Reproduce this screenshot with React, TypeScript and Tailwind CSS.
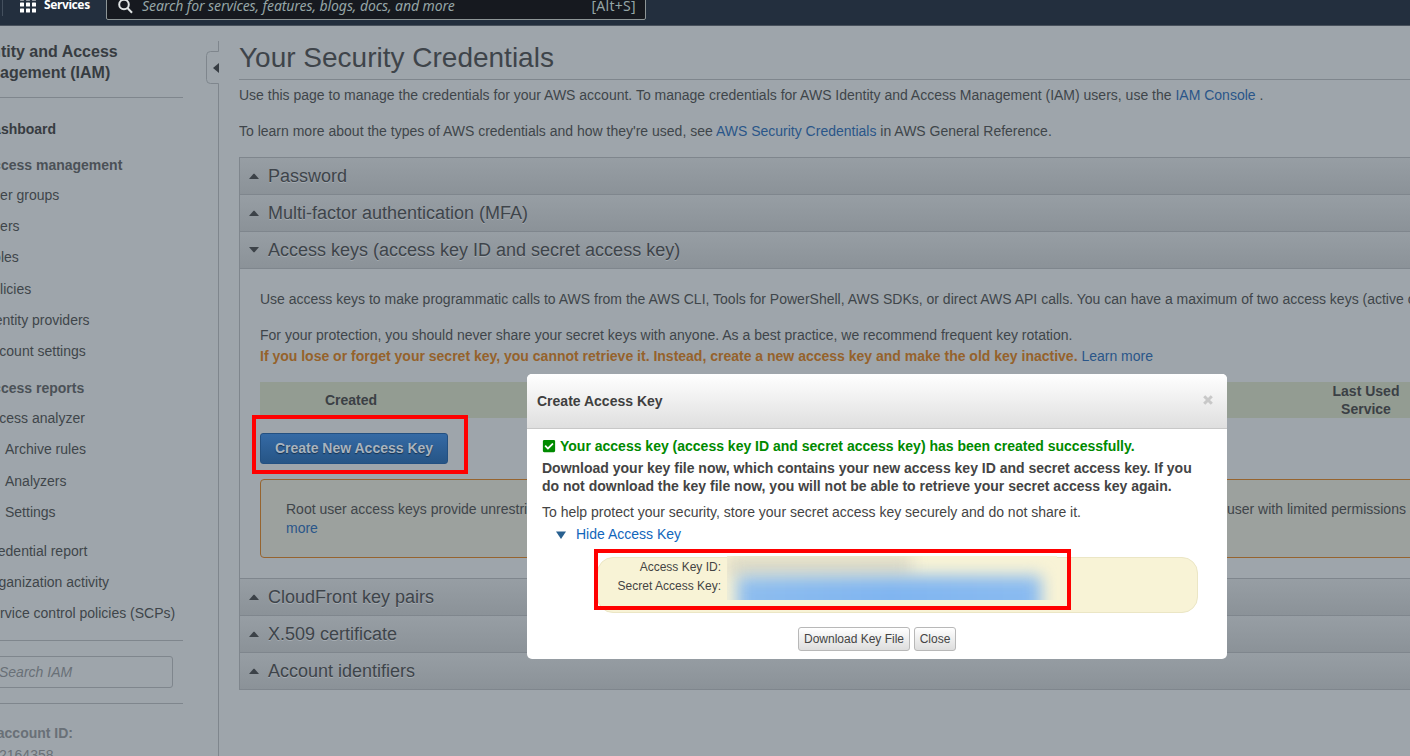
import React from "react";
import { FaCheckSquare } from "react-icons/fa";

const NAV: { label: string; kind: "bold" | "head" | "item" | "sub"; h: string }[] = [
  { label: "Dashboard", kind: "bold", h: "h-[36px]" },
  { label: "Access management", kind: "head", h: "h-[36px]" },
  { label: "User groups", kind: "item", h: "h-[24px]" },
  { label: "Users", kind: "item", h: "h-[38px]" },
  { label: "Roles", kind: "item", h: "h-[24px]" },
  { label: "Policies", kind: "item", h: "h-[40px]" },
  { label: "Identity providers", kind: "item", h: "h-[22px]" },
  { label: "Account settings", kind: "item", h: "h-[40px]" },
  { label: "Access reports", kind: "head", h: "h-[34px]" },
  { label: "Access analyzer", kind: "item", h: "h-[26px]" },
  { label: "Archive rules", kind: "sub", h: "h-[36px]" },
  { label: "Analyzers", kind: "sub", h: "h-[28px]" },
  { label: "Settings", kind: "sub", h: "h-[34px]" },
  { label: "Credential report", kind: "item", h: "h-[44px]" },
  { label: "Organization activity", kind: "item", h: "h-[18px]" },
  { label: "Service control policies (SCPs)", kind: "item", h: "h-[44px]" },
];

const NAV_STYLE = {
  bold: "font-bold text-[#373c41]",
  head: "font-bold text-[#4b5157]",
  item: "text-[#3f454a]",
  sub: "pl-[22px] text-[#3f454a]",
};

function TopBar() {
  return (
    <header className="flex h-[26px] shrink-0 items-start overflow-hidden border-b border-[#48515c] bg-[#232f3e] font-['Noto_Sans','Open_Sans',sans-serif]">
      <div className="ml-[2px] h-[16px] w-px bg-[#44505e]" />
      <svg className="ml-[17px] -mt-[4px] shrink-0" width="16" height="17" viewBox="0 0 16 17" fill="#fff">
        {[0, 6, 12].map((y) =>
          [0, 6, 12].map((x) => <rect key={`${x}-${y}`} x={x} y={y + 0.5} width="4" height="4" rx="0.6" />)
        )}
      </svg>
      <span className="ml-[8px] -mt-[4px] w-[62px] shrink-0 text-[12px] leading-[18px] font-bold tracking-[-0.4px] text-white">Services</span>
      <div className="-mt-[11px] flex h-[31px] w-[540px] items-center rounded-[2px] border border-[#8d9596] bg-[#16191f] pt-[2px] pr-[9px] pl-[11px] text-[#95a5a6]">
        <svg width="15" height="16" viewBox="0 0 15 16" fill="none" stroke="#e0e4e4" strokeWidth="2">
          <circle cx="6" cy="6.5" r="4.8" />
          <path d="M9.5 10 L14 14.8" />
        </svg>
        <span className="ml-[9px] text-[14px] leading-[18px] tracking-[-0.08px] whitespace-nowrap italic">Search for services, features, blogs, docs, and more</span>
        <span className="ml-auto text-[14px] leading-[18px] tracking-[0.3px]">[Alt+S]</span>
      </div>
    </header>
  );
}

function Sidebar() {
  return (
    <nav className="flex h-[730px] w-[206px] shrink-0 flex-col overflow-hidden text-[14px] whitespace-nowrap">
      <div className="-ml-[32px] mt-[15px] text-[16px] leading-[21px] font-bold text-[#373c41]">
        <div>Identity and Access</div>
        <div>Management (IAM)</div>
      </div>
      <div className="mt-[14px] w-[183px] shrink-0 border-t border-[#7f868d]" />
      <div className="-ml-[17px] mt-[13px]">
        {NAV.map((n) => (
          <div key={n.label} className={`flex items-center ${n.h} ${NAV_STYLE[n.kind]}`}>
            {n.label}
          </div>
        ))}
      </div>
      <div className="mt-[5px] w-[183px] shrink-0 border-t border-[#7f868d]" />
      <div className="-ml-[15px] mt-[15px] flex h-[32px] w-[188px] shrink-0 items-center rounded-[3px] border border-[#7f868d] pl-[13px] text-[#697077] italic">
        Search IAM
      </div>
      <div className="mt-[15px] w-[183px] shrink-0 border-t border-[#7f868d]" />
      <div className="-ml-[39px] mt-[18px] text-[14px] leading-[22px] text-[#697077]">
        <div className="font-bold">AWS account ID:</div>
        <div className="pl-[38px]">2164358</div>
      </div>
    </nav>
  );
}

function Rail() {
  return (
    <div className="flex h-[730px] w-[13px] shrink-0 flex-col pt-[15px]">
      <div className="h-[10px] shrink-0 border-r border-[#7f868d]" />
      <svg className="shrink-0" width="13" height="33" viewBox="0 0 13 33" fill="none">
        <path d="M12.5 0V.5H4.5Q.5 .5 .5 4.5V28.5Q.5 32.5 4.5 32.5H12.5V33" stroke="#7f868d" />
        <path d="M13 12V22L7 17Z" fill="#373d43" />
      </svg>
      <div className="grow border-r border-[#7f868d]" />
    </div>
  );
}

function SectionBar({ title, open, last }: { title: string; open?: boolean; last?: boolean }) {
  return (
    <div
      className={`flex shrink-0 items-center border-t border-l border-[#7f868d] bg-linear-to-b from-[#979ea4] to-[#8b9298] pl-[9px] ${last || open ? "h-[38px] border-b" : "h-[37px]"}`}
    >
      <svg className="-mt-[1px]" width="10" height="6" viewBox="0 0 10 6" fill="#3c4248">
        <path d={open ? "M0 0H10L5.5 5.2H4.5Z" : "M0 6H10L5.5 .8H4.5Z"} />
      </svg>
      <h2 className="ml-[9px] text-[18px] leading-[24px] text-[#3e444a] [text-shadow:0_1px_0_#a5acb2]">{title}</h2>
    </div>
  );
}

function AccessKeysPanel() {
  return (
    <section className="h-[309px] shrink-0 border-l border-[#7f868d] pt-[20px] pl-[20px] text-[14px] leading-[21px]">
      <p>
        Use access keys to make programmatic calls to AWS from the AWS CLI, Tools for PowerShell, AWS SDKs, or direct AWS API calls. You can have a maximum of two access keys (active or inactive) at a time.
      </p>
      <p className="mt-[15px]">
        For your protection, you should never share your secret keys with anyone. As a best practice, we recommend frequent key rotation.
      </p>
      <p>
        <b className="text-[#95622b]">
          If you lose or forget your secret key, you cannot retrieve it. Instead, create a new access key and make the old key inactive.
        </b>{" "}
        <a className="text-[#2a5689]">Learn more</a>
      </p>
      <div className="mt-[15px] flex h-[36px] items-center bg-[#939c92] text-center leading-[18px] font-bold text-[#3b4045]">
        <div className="w-[182px] shrink-0">Created</div>
        <div className="ml-[882px] w-[84px] shrink-0 whitespace-normal">Last Used Service</div>
      </div>
      <button className="mt-[15px] block h-[31px] w-[188px] rounded-[3px] border border-[#235081] bg-linear-to-b from-[#356aa5] to-[#265586] text-[14px] font-bold text-[#a9b4bf] [text-shadow:0_1px_1px_#16304d]">
        Create New Access Key
      </button>
      <div className="mt-[15px] flex h-[79px] w-[1400px] flex-col justify-center rounded-[4px] border border-[#96642f] bg-[#9ca19e] pl-[25px] leading-[19px]">
        <div className="flex">
          <span className="w-[941px]">Root user access keys provide unrestricted access</span>
          <span>user with limited permissions and</span>
        </div>
        <a className="text-[#2a5689]">more</a>
      </div>
    </section>
  );
}

function Dialog() {
  return (
    <div className="absolute top-[374px] left-[527px] h-[285px] w-[700px] rounded-[5px] bg-white text-[14px] text-[#444]">
      <div className="flex h-[55px] items-center justify-between rounded-t-[5px] border-b border-[#c8c8c8] bg-linear-to-b from-white to-[#dfdfdf] pr-[14px] pl-[10px]">
        <h3 className="font-bold text-[#3f3f3f]">Create Access Key</h3>
        <svg className="-mt-[2px]" width="10" height="10" viewBox="0 0 10 10" stroke="#c8c8c8" strokeWidth="3">
          <path d="M1.2 1.2L8.8 8.8M8.8 1.2L1.2 8.8" />
        </svg>
      </div>
      <div className="pt-[7px] pl-[15px] whitespace-nowrap">
        <div className="flex h-[20px] items-center font-bold text-[#008a00]">
          <FaCheckSquare className="mr-[4px] h-[14px] w-[14px]" />
          Your access key (access key ID and secret access key) has been created successfully.
        </div>
        <p className="mt-[3px] leading-[18px] font-bold">
          Download your key file now, which contains your new access key ID and secret access key. If you
          <br />
          do not download the key file now, you will not be able to retrieve your secret access key again.
        </p>
        <p className="mt-[8px] leading-[18px]">
          To help protect your security, store your secret access key securely and do not share it.
        </p>
        <div className="mt-[4px] flex h-[18px] items-center pl-[14px]">
          <svg className="mt-[2px]" width="10" height="8" viewBox="0 0 10 8" fill="#286090">
            <path d="M0 .5H10L5 8Z" />
          </svg>
          <a className="ml-[10px] text-[#1166bb]">Hide Access Key</a>
        </div>
      </div>
      <div className="mt-[14px] ml-[70px] flex h-[56px] w-[601px] rounded-[16px] border border-[#ebe6c5] bg-[#f8f3d6] text-[12px] leading-[19px]">
        <div className="w-[123px] text-right">
          <div>Access Key ID:</div>
          <div>Secret Access Key:</div>
        </div>
        <div className="-mt-[2px] ml-[6px] h-[44px] w-[330px] overflow-hidden bg-[#f8f3d6]">
          <div className="h-[20px] w-[184px] bg-[#dcd8c4] blur-[8px]" />
          <div className="ml-[10px] h-[44px] w-[304px] bg-linear-to-r from-[#8ebdee] via-[#80b5f0] to-[#8abbf0] blur-[8px]" />
        </div>
      </div>
      <div className="mt-[14px] ml-[271px] flex gap-[4px] text-[12px] text-[#444]">
        <button className="h-[24px] w-[112px] rounded-[3px] border border-[#b8b8b8] bg-linear-to-b from-white to-[#dddddd] whitespace-nowrap">Download Key File</button>
        <button className="h-[24px] w-[42px] rounded-[3px] border border-[#b8b8b8] bg-linear-to-b from-white to-[#dddddd]">Close</button>
      </div>
    </div>
  );
}

export default function App() {
  return (
    <div className="relative h-[756px] w-[1410px] overflow-hidden bg-[#9ea5ab] font-['Liberation_Sans',Arial,sans-serif] text-[#3f454a]">
      <TopBar />
      <div className="flex">
        <Sidebar />
        <Rail />
        <main className="ml-[20px] flex h-[730px] grow flex-col overflow-hidden whitespace-nowrap">
          <h1 className="h-[54px] shrink-0 border-b border-[#7f868d] pt-[14px] text-[28px] leading-[36px] text-[#3e444a]">
            Your Security Credentials
          </h1>
          <p className="mt-[5px] text-[14px] leading-[21px]">
            Use this page to manage the credentials for your AWS account. To manage credentials for AWS Identity and Access Management (IAM) users, use the{" "}
            <a className="text-[#2a5689]">IAM Console</a> .
          </p>
          <p className="mt-[15px] mb-[15px] text-[14px] leading-[21px]">
            To learn more about the types of AWS credentials and how they're used, see{" "}
            <a className="text-[#2a5689]">AWS Security Credentials</a> in AWS General Reference.
          </p>
          <SectionBar title="Password" />
          <SectionBar title="Multi-factor authentication (MFA)" />
          <SectionBar title="Access keys (access key ID and secret access key)" open />
          <AccessKeysPanel />
          <SectionBar title="CloudFront key pairs" />
          <SectionBar title="X.509 certificate" />
          <SectionBar title="Account identifiers" last />
        </main>
      </div>
      <Dialog />
      <div className="absolute top-[415px] left-[252px] h-[59px] w-[216px] border-4 border-[#ff0000]" />
      <div className="absolute top-[549px] left-[594px] h-[61px] w-[477px] border-4 border-[#ff0000]" />
    </div>
  );
}
